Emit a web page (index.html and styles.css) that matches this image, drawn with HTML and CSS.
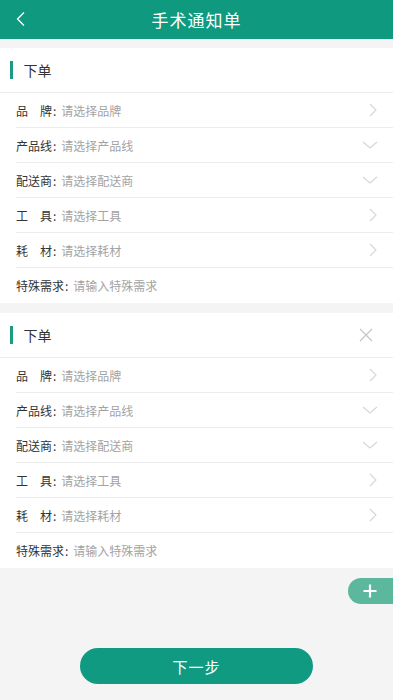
FILE: index.html
```html
<!DOCTYPE html>
<html lang="zh">
<head>
<meta charset="utf-8">
<meta name="viewport" content="width=device-width, initial-scale=1">
<title>手术通知单</title>
<link rel="stylesheet" href="styles.css">
</head>
<body>
<header class="topbar">
  <svg class="back" width="12" height="16" viewBox="0 0 12 16"><path d="M9 1.5 L2.5 8 L9 14.5" fill="none" stroke="#fff" stroke-width="1.3"/></svg>
  <h1 class="title">手术通知单</h1>
</header>

<main class="page">
  <section class="card">
    <div class="card-head"><span class="bar"></span><span class="head-text">下单</span></div>
    <div class="row"><span class="label">品　牌</span><span class="colon">:</span><span class="value">请选择品牌</span><svg class="ico" width="10" height="14" viewBox="0 0 10 14"><path d="M2 1 L8 7 L2 13" fill="none" stroke="#d6d6d6" stroke-width="1.1"/></svg></div>
    <div class="row"><span class="label">产品线</span><span class="colon">:</span><span class="value">请选择产品线</span><svg class="ico" width="16" height="10" viewBox="0 0 16 10"><path d="M1 2 L8 8 L15 2" fill="none" stroke="#d6d6d6" stroke-width="1.1"/></svg></div>
    <div class="row"><span class="label">配送商</span><span class="colon">:</span><span class="value">请选择配送商</span><svg class="ico" width="16" height="10" viewBox="0 0 16 10"><path d="M1 2 L8 8 L15 2" fill="none" stroke="#d6d6d6" stroke-width="1.1"/></svg></div>
    <div class="row"><span class="label">工　具</span><span class="colon">:</span><span class="value">请选择工具</span><svg class="ico" width="10" height="14" viewBox="0 0 10 14"><path d="M2 1 L8 7 L2 13" fill="none" stroke="#d6d6d6" stroke-width="1.1"/></svg></div>
    <div class="row"><span class="label">耗　材</span><span class="colon">:</span><span class="value">请选择耗材</span><svg class="ico" width="10" height="14" viewBox="0 0 10 14"><path d="M2 1 L8 7 L2 13" fill="none" stroke="#d6d6d6" stroke-width="1.1"/></svg></div>
    <div class="row last"><span class="label">特殊需求</span><span class="colon">:</span><span class="value">请输入特殊需求</span></div>
  </section>

  <section class="card">
    <div class="card-head"><span class="bar"></span><span class="head-text">下单</span>
      <svg class="close" width="14" height="14" viewBox="0 0 14 14"><path d="M1 1 L13 13 M13 1 L1 13" fill="none" stroke="#c4c4c4" stroke-width="1.2"/></svg>
    </div>
    <div class="row"><span class="label">品　牌</span><span class="colon">:</span><span class="value">请选择品牌</span><svg class="ico" width="10" height="14" viewBox="0 0 10 14"><path d="M2 1 L8 7 L2 13" fill="none" stroke="#d6d6d6" stroke-width="1.1"/></svg></div>
    <div class="row"><span class="label">产品线</span><span class="colon">:</span><span class="value">请选择产品线</span><svg class="ico" width="16" height="10" viewBox="0 0 16 10"><path d="M1 2 L8 8 L15 2" fill="none" stroke="#d6d6d6" stroke-width="1.1"/></svg></div>
    <div class="row"><span class="label">配送商</span><span class="colon">:</span><span class="value">请选择配送商</span><svg class="ico" width="16" height="10" viewBox="0 0 16 10"><path d="M1 2 L8 8 L15 2" fill="none" stroke="#d6d6d6" stroke-width="1.1"/></svg></div>
    <div class="row"><span class="label">工　具</span><span class="colon">:</span><span class="value">请选择工具</span><svg class="ico" width="10" height="14" viewBox="0 0 10 14"><path d="M2 1 L8 7 L2 13" fill="none" stroke="#d6d6d6" stroke-width="1.1"/></svg></div>
    <div class="row"><span class="label">耗　材</span><span class="colon">:</span><span class="value">请选择耗材</span><svg class="ico" width="10" height="14" viewBox="0 0 10 14"><path d="M2 1 L8 7 L2 13" fill="none" stroke="#d6d6d6" stroke-width="1.1"/></svg></div>
    <div class="row last"><span class="label">特殊需求</span><span class="colon">:</span><span class="value">请输入特殊需求</span></div>
  </section>

  <div class="add-wrap">
    <div class="add"><svg width="14" height="14" viewBox="0 0 14 14"><path d="M7 0.5 V13.5 M0.5 7 H13.5" stroke="#fff" stroke-width="2.2"/></svg></div>
  </div>

  <div class="btn-wrap">
    <button class="next">下一步</button>
  </div>
</main>
</body>
</html>
```

FILE: styles.css
```css
* { box-sizing: border-box; }
html, body { margin: 0; padding: 0; }
body {
  background: #f4f4f4;
  font-family: "Noto Sans CJK SC", "Noto Sans", sans-serif;
  width: 393px;
  height: 700px;
  overflow: hidden;
}
.topbar {
  height: 39px;
  background: #0f9a80;
  display: flex;
  align-items: center;
  justify-content: center;
  position: relative;
}
.back {
  position: absolute;
  left: 15px;
  top: 11px;
}
.title {
  margin: 0;
  color: #fff;
  font-size: 17px;
  font-weight: 400;
  letter-spacing: 1px;
  line-height: 1;
}
.page {
  padding-top: 9px;
}
.card {
  background: #fff;
  margin-bottom: 10px;
}
.card-head {
  height: 45px;
  display: flex;
  align-items: center;
  padding-left: 10px;
  padding-right: 20px;
  border-bottom: 1px solid #ececec;
}
.bar {
  width: 2.5px;
  height: 18px;
  background: #1c9a82;
  margin-right: 11px;
}
.head-text {
  font-size: 14px;
  color: #333;
  flex: 1;
}
.close { display: block; }
.row {
  height: 35px;
  margin-left: 16px;
  padding-right: 15px;
  display: flex;
  align-items: center;
  border-bottom: 1px solid #ececec;
  font-size: 12px;
}
.row.last { border-bottom: none; }
.label { color: #333; }
.colon { color: #333; margin: 0 5px 0 1px; }
.value { color: #a3a3a3; flex: 1; }
.ico { display: block; }
.add-wrap {
  display: flex;
  justify-content: flex-end;
  margin-top: 0;
}
.add {
  width: 45px;
  height: 26px;
  background: #5cb89c;
  border-radius: 13px 0 0 13px;
  display: flex;
  align-items: center;
  justify-content: center;
  padding-right: 2px;
}
.add svg { display: block; }
.btn-wrap {
  display: flex;
  justify-content: center;
  margin-top: 44px;
}
.next {
  width: 233px;
  height: 36px;
  border: none;
  border-radius: 18px;
  background: #109a82;
  color: #fff;
  font-family: "Noto Sans CJK SC", sans-serif;
  font-size: 15px;
  letter-spacing: 1px;
}
```
